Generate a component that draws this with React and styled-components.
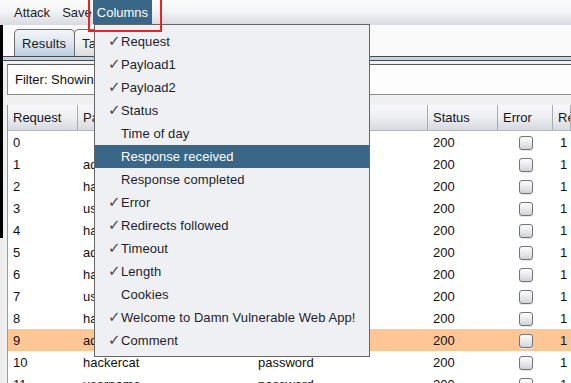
import React from "react";
import styled, { createGlobalStyle } from "styled-components";

const Global = createGlobalStyle`
  html, body { margin: 0; padding: 0; background: #fafafa; }
  body { font-family: "Liberation Sans", Arial, sans-serif; font-size: 13px; }
`;

const Window = styled.div`
  position: relative;
  width: 571px;
  height: 383px;
  overflow: hidden;
  background: #f4f4f4;
  color: #111;
`;

const MenuBar = styled.div`
  height: 25px;
  display: flex;
  gap: 1px;
  padding-left: 10px;
  background: linear-gradient(#fbfbfb 0%, #f3f4f6 45%, #d8dae0 100%);
`;

const MenuTitle = styled.div`
  height: 24px;
  padding: 0 ${(p) => p.$padR || "4px"} 0 4px;
  display: flex;
  align-items: center;
  color: ${(p) => (p.$active ? "#fff" : "#1c1c2a")};
  background: ${(p) => (p.$active ? "#3a6788" : "transparent")};
`;

const Body = styled.div`
  display: flex;
  height: 358px;
`;

const LeftEdge = styled.div`
  width: 3px;
  flex: none;
  background: linear-gradient(#000 0, #000 213px, #ececec 213px);
`;

const Main = styled.div`
  flex: 1;
  display: flex;
  flex-direction: column;
  min-width: 0;
`;

const TabStrip = styled.div`
  height: 31px;
  flex: none;
  display: flex;
  align-items: flex-end;
  padding-left: 11px;
  background: #fafafa;
`;

const Tab = styled.div`
  height: 26px;
  padding: 0 8px 0 7px;
  display: flex;
  align-items: center;
  border: 1px solid #6e6e6e;
  border-bottom: none;
  border-radius: 5px 5px 0 0;
  margin-right: -1px;
  letter-spacing: 0.1px;
  color: #1a1a24;
  background: ${(p) =>
    p.$active
      ? "linear-gradient(#f2f5f9 0%, #dde6ef 50%, #b9cce0 100%)"
      : "linear-gradient(#fafafa 0%, #eeeeee 60%, #d9dbdf 100%)"};
`;

const TabRule = styled.div`
  height: 3px;
  flex: none;
  border-top: 1px solid #4a4a4a;
  border-bottom: 1px solid #4a4a4a;
  background: #c0d3e7;
`;

const Content = styled.div`
  flex: 1;
  display: flex;
  flex-direction: column;
  padding: 3px 0 0 4px;
  background: #f0f0f0;
  min-height: 0;
  overflow: hidden;
`;

const FilterBar = styled.div`
  height: 29px;
  flex: none;
  display: flex;
  align-items: center;
  padding-left: 7px;
  background: #fdfdfd;
  border: 1px solid #8c8c8c;
  border-top-color: #5c5c5c;
  border-right: none;
  white-space: nowrap;
  color: #111;
`;

const Table = styled.div`
  margin-top: 10px;
  flex: none;
  background: #fff;
  border-left: 1px solid #9a9a9a;
`;

const cols = "70px 175px 175px 70px 55px 1fr";

const HeaderRow = styled.div`
  display: grid;
  grid-template-columns: ${cols};
  height: 25px;
  border-bottom: 1px solid #b4b7bc;
  background: linear-gradient(#f7f8fa 0%, #eceef1 50%, #d6d9de 100%);
`;

const HeadCell = styled.div`
  display: flex;
  align-items: center;
  padding-left: 5px;
  border-right: 1px solid #a9abaf;
  white-space: nowrap;
  overflow: hidden;
  color: #15151f;
`;

const Row = styled.div`
  display: grid;
  grid-template-columns: ${cols};
  height: 22px;
  padding-top: 1px;
  box-sizing: border-box;
  background: ${(p) => (p.$hl ? "#fec695" : "#fff")};
`;

const Cell = styled.div`
  display: flex;
  align-items: center;
  justify-content: ${(p) => (p.$center ? "center" : "flex-start")};
  padding-left: ${(p) => (p.$center ? "1px" : p.$pad || "5px")};
  white-space: nowrap;
  overflow: hidden;
  color: #111;
`;

const Check = styled.div`
  width: 12px;
  height: 12px;
  border: 1px solid #727478;
  border-radius: 3px;
  background: linear-gradient(#fdfdfd 0%, #e4e6ea 60%, #cfd2d7 100%);
  box-shadow: 0 1px 0 #e8e8e8;
`;

const Dropdown = styled.div`
  position: absolute;
  left: 94px;
  top: 24px;
  width: 274px;
  padding: 5px 0 4px;
  border: 1px solid #666;
  background: #eef0f4;
  z-index: 5;
`;

const Item = styled.div`
  height: 23px;
  display: grid;
  grid-template-columns: 13px 1fr;
  align-items: center;
  padding-left: 13px;
  white-space: nowrap;
  letter-spacing: 0.08px;
  color: ${(p) => (p.$hl ? "#fff" : "#1e1e2c")};
  background: ${(p) => (p.$hl ? "#3a6788" : "transparent")};
`;

const Tick = styled.span`
  font-family: "DejaVu Sans", sans-serif;
  font-size: 15px;
  color: #48484c;
  line-height: 1;
`;

const Annotation = styled.div`
  position: absolute;
  left: 88px;
  top: -2px;
  width: 70px;
  height: 30px;
  border: 2px solid #e4262b;
  z-index: 6;
  pointer-events: none;
`;

const items = [
  ["Request", true],
  ["Payload1", true],
  ["Payload2", true],
  ["Status", true],
  ["Time of day", false],
  ["Response received", false, true],
  ["Response completed", false],
  ["Error", true],
  ["Redirects followed", true],
  ["Timeout", true],
  ["Length", true],
  ["Cookies", false],
  ["Welcome to Damn Vulnerable Web App!", true],
  ["Comment", true],
];

const p1 = ["admin", "hackercat", "username", "hacker"];
const p2 = ["123456", "letmein", "password"];
const rows = Array.from({ length: 12 }, (_, i) =>
  i === 0
    ? { id: 0, a: "", b: "" }
    : { id: i, a: p1[(i - 1) % 4], b: p2[Math.min(2, Math.floor((i - 1) / 4))] }
);

export default function App() {
  return (
    <>
      <Global />
      <Window>
        <MenuBar>
          <MenuTitle $padR="7px">Attack</MenuTitle>
          <MenuTitle $padR="0px">Save</MenuTitle>
          <MenuTitle $active>Columns</MenuTitle>
        </MenuBar>
        <Body>
          <LeftEdge />
          <Main>
            <TabStrip>
              <Tab $active>Results</Tab>
              <Tab>Target</Tab>
              <Tab>Positions</Tab>
              <Tab>Payloads</Tab>
              <Tab>Options</Tab>
            </TabStrip>
            <TabRule />
            <Content>
              <FilterBar>Filter: Showing all items</FilterBar>
              <Table>
                <HeaderRow>
                  <HeadCell>Request</HeadCell>
                  <HeadCell>Payload1</HeadCell>
                  <HeadCell>Payload2</HeadCell>
                  <HeadCell>Status</HeadCell>
                  <HeadCell>Error</HeadCell>
                  <HeadCell>Redirects followed</HeadCell>
                </HeaderRow>
                {rows.map((r) => (
                  <Row key={r.id} $hl={r.id === 9}>
                    <Cell>{r.id}</Cell>
                    <Cell>{r.a}</Cell>
                    <Cell>{r.b}</Cell>
                    <Cell>200</Cell>
                    <Cell $center>
                      <Check />
                    </Cell>
                    <Cell $pad="7px">1</Cell>
                  </Row>
                ))}
              </Table>
            </Content>
          </Main>
        </Body>
        <Dropdown>
          {items.map(([label, on, hl]) => (
            <Item key={label} $hl={hl}>
              <Tick>{on ? "✓" : ""}</Tick>
              <span>{label}</span>
            </Item>
          ))}
        </Dropdown>
        <Annotation />
      </Window>
    </>
  );
}
